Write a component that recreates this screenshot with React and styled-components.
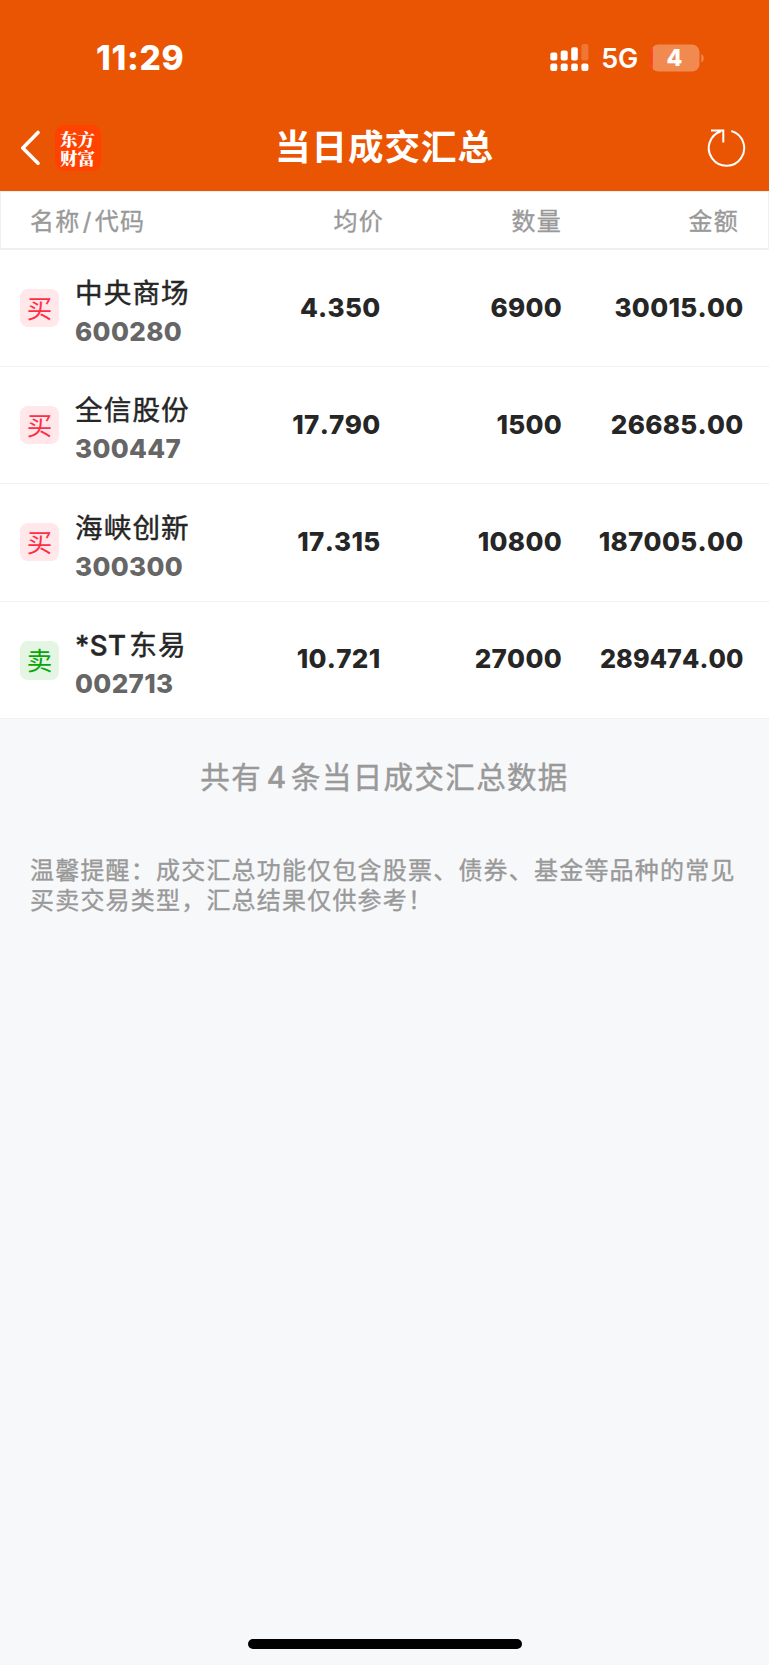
import React from "react";
import styled, { createGlobalStyle } from "styled-components";

const GlobalStyle = createGlobalStyle`
    * {
        box-sizing: border-box;
    }
    body {
        margin: 0;
        background: #f7f8fa;
        font-family: Inter, "Noto Sans CJK SC", sans-serif;
    }
`;

const Page = styled.div`
    display: flex;
    flex-direction: column;
    height: 1665px;
    overflow: hidden;
    background: #f7f8fa;
`;

const Header = styled.header`
    height: 191px;
    flex: none;
    background: #ea5504;
    color: #fff;
`;

const StatusBar = styled.div`
    display: flex;
    justify-content: space-between;
    align-items: center;
    height: 104px;
    padding: 11px 64px 0 96px;
`;

const Clock = styled.span`
    font-size: 33.5px;
    font-weight: 780;
    letter-spacing: 0.7px;
`;

const StatusIcons = styled.div`
    display: flex;
    align-items: center;
`;

const Network = styled.span`
    margin: 2px 13px 0 12px;
    font-size: 27px;
    font-weight: 640;
    letter-spacing: -0.2px;
`;

const NavBar = styled.div`
    display: grid;
    grid-template-columns: 120px 1fr 120px;
    align-items: center;
    height: 87px;
`;

const NavLeft = styled.div`
    display: flex;
    align-items: center;
    padding-left: 20px;
`;

const Logo = styled.div`
    width: 46px;
    height: 46px;
    margin-left: 15px;
    padding: 4px 5px;
    border-radius: 9px;
    background: #ff4200;
    font-family: "Noto Serif CJK SC", "Noto Sans CJK SC", serif;
    font-size: 17.5px;
    font-weight: 900;
    line-height: 19px;
    word-break: break-all;
`;

const Title = styled.h1`
    margin: 0;
    text-align: center;
    font-size: 35.5px;
    font-weight: 700;
    line-height: 50px;
    letter-spacing: 1px;
`;

const Refresh = styled.div`
    display: flex;
    justify-content: flex-end;
    padding-right: 22px;
`;

const TableHead = styled.div`
    display: grid;
    grid-template-columns: 172px 182px 178px 1fr;
    align-items: center;
    flex: none;
    height: 59px;
    padding: 3px 29px 0;
    border: 1px solid #f0f0f2;
    border-bottom-width: 2px;
    background: #fff;
    color: #999;
    font-size: 24px;
    line-height: 36px;
    letter-spacing: 1.2px;
`;

const HeadCell = styled.span`
    text-align: ${props => props.$left ? "left" : "right"};
    word-spacing: -5.7px;
    -webkit-text-stroke: 0.35px;
`;

const Row = styled.div`
    display: grid;
    grid-template-columns: 75px 124px 181.5px 181.5px 181.5px;
    flex: none;
    height: 117.2px;
    border-bottom: 1px solid #f0f1f3;
    background: #fff;
`;

const Tag = styled.span`
    display: flex;
    align-items: center;
    justify-content: center;
    width: 39px;
    height: ${props => props.$sell ? "39px" : "38px"};
    margin: 39px 0 0 20px;
    padding-top: 2px;
    border-radius: 8px;
    background: ${props => props.$sell ? "#e4f5e4" : "#ffe7ea"};
    color: ${props => props.$sell ? "#0aa50a" : "#ff2d45"};
    font-size: 25.5px;
    line-height: 38px;
`;

const Stock = styled.div`
    display: flex;
    flex-direction: column;
    white-space: nowrap;
`;

const Name = styled.span`
    margin-top: 23.3px;
    color: #262626;
    font-size: 27.6px;
    line-height: 40px;
    letter-spacing: 1.1px;
    word-spacing: -6px;
    -webkit-text-stroke: 0.45px;
`;

const Latin = styled.span`
    font-weight: 500;
    letter-spacing: 0.4px;
`;

const Code = styled.span`
    margin-top: 3px;
    color: #666;
    font-size: 26px;
    font-weight: 760;
    font-kerning: none;
    line-height: 32px;
    letter-spacing: 0.35px;
`;

const Value = styled.span`
    margin-top: 41.5px;
    color: #262626;
    text-align: right;
    font-size: ${props => props.$fit ? "25.2px" : "26px"};
    font-weight: 780;
    font-kerning: none;
    line-height: 32px;
    letter-spacing: ${props => props.$fit ? "0.1px" : "0.3px"};
`;

const Summary = styled.p`
    margin: 35px 0 0;
    color: #999;
    text-align: center;
    font-size: 29.5px;
    line-height: 46px;
    letter-spacing: 1.35px;
    word-spacing: -5px;
    -webkit-text-stroke: 0.45px;
`;

const Notice = styled.p`
    margin: 56px 0 0;
    padding: 0 20px 0 30px;
    color: #999;
    font-size: 24px;
    line-height: 30px;
    letter-spacing: 1.2px;
    -webkit-text-stroke: 0.35px;
`;

const HomeIndicator = styled.div`
    width: 274px;
    height: 10px;
    margin: auto auto 16px;
    border-radius: 5px;
    background: #000;
`;

const trades = [
    { name: "中央商场", code: "600280", price: "4.350", amount: "6900", total: "30015.00" },
    { name: "全信股份", code: "300447", price: "17.790", amount: "1500", total: "26685.00" },
    { name: "海峡创新", code: "300300", price: "17.315", amount: "10800", total: "187005.00" },
    { prefix: "*ST", name: " 东易", code: "002713", price: "10.721", amount: "27000", total: "289474.00", sell: true, fit: true }
];

function Signal() {
    return (
        <svg width="39" height="28" viewBox="0 0 39 28" fill="#fff">
            <rect x="0.3" y="8.5" width="7" height="8" rx="2" />
            <rect x="10.7" y="6.5" width="7" height="10" rx="2" />
            <rect x="21.2" y="3.2" width="6.6" height="13.3" rx="2" />
            <rect x="31.4" y="0" width="7" height="16.5" rx="2" opacity="0.2" />
            <rect x="0.3" y="19.5" width="7" height="7.5" rx="2" />
            <rect x="10.7" y="19.5" width="7" height="7.5" rx="2" />
            <rect x="21.2" y="19.5" width="6.6" height="7.5" rx="2" />
            <rect x="31.4" y="19.5" width="7" height="7.5" rx="2" />
        </svg>
    );
}

function Battery() {
    return (
        <svg width="54" height="28" viewBox="0 0 54 28">
            <defs>
                <clipPath id="cell">
                    <rect x="0" y="0.5" width="48.5" height="27" rx="7.5" />
                </clipPath>
            </defs>
            <g clipPath="url(#cell)">
                <rect width="49" height="28" fill="#f18a51" />
                <rect width="1.8" height="28" fill="#ff3b30" />
            </g>
            <path d="M50.3 10v8.4c3.2-1.4 3.2-7 0-8.4z" fill="#f18a51" />
            <text x="23.4" y="22" textAnchor="middle" fill="#fff" fontFamily="Inter" fontSize="23" fontWeight="850">4</text>
        </svg>
    );
}

class App extends React.Component {
    render() {
        return (
            <Page>
                <GlobalStyle />
                <Header>
                    <StatusBar>
                        <Clock>11:29</Clock>
                        <StatusIcons>
                            <Signal />
                            <Network>5G</Network>
                            <Battery />
                        </StatusIcons>
                    </StatusBar>
                    <NavBar>
                        <NavLeft>
                            <svg width="20" height="36" viewBox="0 0 20 36" fill="none" stroke="#fff" strokeWidth="3.6" strokeLinecap="round" strokeLinejoin="round">
                                <path d="M18 2.5 2.8 18 18 33.2" />
                            </svg>
                            <Logo>东方财富</Logo>
                        </NavLeft>
                        <Title>当日成交汇总</Title>
                        <Refresh>
                            <svg width="40" height="40" viewBox="0 0 40 40" fill="none" stroke="#fff" strokeWidth="2">
                                <path d="M24.3 3A17.7 17.7 0 1 1 14 3.2M4 2.4h12.3V14.5" />
                            </svg>
                        </Refresh>
                    </NavBar>
                </Header>
                <TableHead>
                    <HeadCell $left>名称 / 代码</HeadCell>
                    <HeadCell>均价</HeadCell>
                    <HeadCell>数量</HeadCell>
                    <HeadCell>金额</HeadCell>
                </TableHead>
                {trades.map(t => (
                    <Row key={t.code}>
                        <Tag $sell={t.sell}>{t.sell ? "卖" : "买"}</Tag>
                        <Stock>
                            <Name>{t.prefix && <Latin>{t.prefix}</Latin>}{t.name}</Name>
                            <Code>{t.code}</Code>
                        </Stock>
                        <Value>{t.price}</Value>
                        <Value>{t.amount}</Value>
                        <Value $fit={t.fit}>{t.total}</Value>
                    </Row>
                ))}
                <Summary>共有 <Latin>4</Latin> 条当日成交汇总数据</Summary>
                <Notice>温馨提醒：成交汇总功能仅包含股票、债券、基金等品种的常见买卖交易类型，汇总结果仅供参考！</Notice>
                <HomeIndicator />
            </Page>
        );
    }
}

export default App;
